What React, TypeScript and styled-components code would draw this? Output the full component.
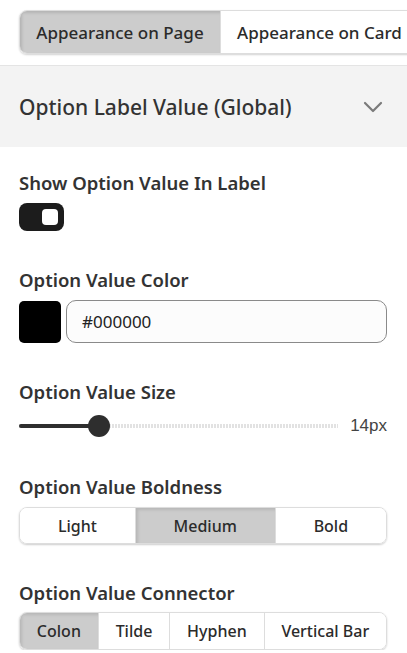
import React, { useState } from "react";
import styled, { createGlobalStyle } from "styled-components";

const Global = createGlobalStyle`
  html, body { margin: 0; padding: 0; background: #ffffff; }
  body { font-family: "Noto Sans", "Open Sans", sans-serif; color: #333333; overflow: hidden; }
  * { box-sizing: border-box; }
`;

const Page = styled.div`
  width: 407px;
  overflow: hidden;
`;

const TabStrip = styled.div`
  padding: 10px 0 0 19px;
  height: 65px;
  white-space: nowrap;
`;

const TabGroup = styled.div`
  display: inline-flex;
  height: 44px;
  border: 1px solid #dddddd;
  border-radius: 8px;
  overflow: hidden;
  box-shadow: 0 1px 2px rgba(0, 0, 0, 0.18);
`;

const Tab = styled.button<{ $active?: boolean }>`
  font-family: inherit;
  font-size: 17px;
  font-weight: 500;
  color: #2b2b2b;
  border: none;
  border-left: ${(p) => (p.$active ? "none" : "1px solid #dddddd")};
  background: ${(p) => (p.$active ? "#cccccc" : "#ffffff")};
  box-shadow: ${(p) => (p.$active ? "inset 2px 2px 3px rgba(0,0,0,0.12)" : "none")};
  padding: 0 16px;
  width: ${(p) => (p.$active ? "200px" : "auto")};
  white-space: nowrap;
  display: flex;
  align-items: center;
  justify-content: center;
`;

const SectionHeader = styled.div`
  height: 82px;
  background: #f3f3f3;
  border-top: 1px solid #e4e4e4;
  display: flex;
  align-items: center;
  justify-content: space-between;
  padding: 0 24px 0 19px;
`;

const SectionTitle = styled.h2`
  margin: 0;
  font-size: 21px;
  font-weight: 500;
  color: #333333;
`;

const Body = styled.div`
  padding: 24px 20px 0 19px;
  display: flex;
  flex-direction: column;
  gap: 37px;
`;

const Field = styled.div<{ $gap?: number }>`
  display: flex;
  flex-direction: column;
  gap: ${(p) => p.$gap ?? 8}px;
`;

const Label = styled.div`
  font-size: 18.5px;
  font-weight: 600;
  line-height: 24px;
  color: #333333;
`;

const Toggle = styled.button<{ $on: boolean }>`
  width: 45px;
  height: 28px;
  border-radius: 8px;
  border: none;
  background: #1c1c1c;
  padding: 0 6px;
  display: flex;
  align-items: center;
  justify-content: ${(p) => (p.$on ? "flex-end" : "flex-start")};
  cursor: pointer;
`;

const Knob = styled.span`
  width: 16px;
  height: 16px;
  border-radius: 4px;
  background: #ffffff;
`;

const ColorRow = styled.div`
  display: flex;
  gap: 5px;
  align-items: center;
`;

const Swatch = styled.div<{ $color: string }>`
  width: 42px;
  height: 42px;
  border-radius: 5px;
  background: ${(p) => p.$color};
  flex: none;
`;

const HexInput = styled.input`
  flex: 1;
  height: 43px;
  border: 1px solid #8a8a8a;
  border-radius: 10px;
  background: #fcfcfc;
  font-family: inherit;
  font-size: 17px;
  color: #222222;
  padding: 0 15px;
  outline: none;
`;

const SliderRow = styled.div`
  display: flex;
  align-items: center;
  height: 24px;
  gap: 12px;
`;

const Track = styled.div`
  position: relative;
  flex: 1;
  height: 4px;
  background: repeating-linear-gradient(
    90deg,
    #e2e2e2 0,
    #e2e2e2 2px,
    transparent 2px,
    transparent 3px
  );
`;

const Fill = styled.div`
  position: absolute;
  left: 0;
  top: 0;
  height: 4px;
  border-radius: 2px;
  background: #2e2e2e;
`;

const Thumb = styled.div`
  position: absolute;
  top: 50%;
  width: 22px;
  height: 22px;
  border-radius: 50%;
  background: #2e2e2e;
  transform: translate(-50%, -50%);
`;

const SliderValue = styled.span`
  font-family: "Liberation Sans", Arial, sans-serif;
  font-size: 17px;
  color: #444444;
  min-width: 37px;
  text-align: right;
`;

const Segmented = styled.div<{ $h: number }>`
  display: flex;
  height: ${(p) => p.$h}px;
  border: 1px solid #dddddd;
  border-radius: 8px;
  overflow: hidden;
  box-shadow: 0 1px 2px rgba(0, 0, 0, 0.2);
`;

const Segment = styled.button<{ $active?: boolean }>`
  flex: 1 1 auto;
  font-family: inherit;
  font-size: 16px;
  font-weight: 500;
  color: #2b2b2b;
  border: none;
  border-left: 1px solid #dddddd;
  background: ${(p) => (p.$active ? "#cccccc" : "#ffffff")};
  box-shadow: ${(p) => (p.$active ? "inset 2px 2px 3px rgba(0,0,0,0.1)" : "none")};
  padding: 0 12px;
  &:first-child { border-left: none; }
`;

const Chevron = () => (
  <svg width="20" height="12" viewBox="0 0 20 12" fill="none">
    <path d="M2 2 L10 10 L18 2" stroke="#7a7a7a" strokeWidth="2.2" strokeLinecap="round" strokeLinejoin="round" />
  </svg>
);

export default function App() {
  const [on, setOn] = useState(true);
  const [weight, setWeight] = useState("Medium");
  const [conn, setConn] = useState("Colon");
  const pct = (99 - 19) / (338 - 19);
  return (
    <Page>
      <Global />
      <TabStrip>
        <TabGroup>
          <Tab $active>Appearance on Page</Tab>
          <Tab>Appearance on Card</Tab>
        </TabGroup>
      </TabStrip>
      <SectionHeader>
        <SectionTitle>Option Label Value (Global)</SectionTitle>
        <Chevron />
      </SectionHeader>
      <Body>
        <Field>
          <Label>Show Option Value In Label</Label>
          <Toggle $on={on} onClick={() => setOn(!on)}>
            <Knob />
          </Toggle>
        </Field>
        <Field>
          <Label>Option Value Color</Label>
          <ColorRow>
            <Swatch $color="#000000" />
            <HexInput defaultValue="#000000" />
          </ColorRow>
        </Field>
        <Field $gap={10}>
          <Label>Option Value Size</Label>
          <SliderRow>
            <Track>
              <Fill style={{ width: `${pct * 100}%` }} />
              <Thumb style={{ left: `${pct * 100}%` }} />
            </Track>
            <SliderValue>14px</SliderValue>
          </SliderRow>
        </Field>
        <Field>
          <Label>Option Value Boldness</Label>
          <Segmented $h={37}>
            {["Light", "Medium", "Bold"].map((w) => (
              <Segment key={w} $active={w === weight} onClick={() => setWeight(w)}>
                {w}
              </Segment>
            ))}
          </Segmented>
        </Field>
        <Field $gap={7}>
          <Label>Option Value Connector</Label>
          <Segmented $h={38}>
            {["Colon", "Tilde", "Hyphen", "Vertical Bar"].map((w) => (
              <Segment key={w} $active={w === conn} onClick={() => setConn(w)}>
                {w}
              </Segment>
            ))}
          </Segmented>
        </Field>
      </Body>
    </Page>
  );
}
